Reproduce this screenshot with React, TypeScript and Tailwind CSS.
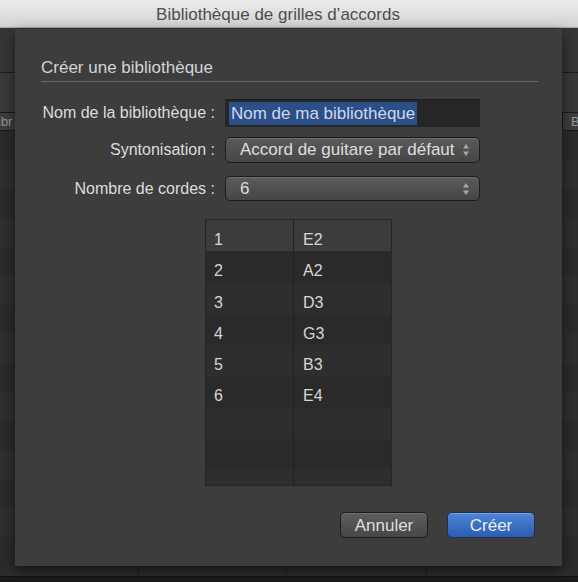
const FONT = { fontFamily: '"Liberation Sans", Arial, sans-serif' }

const STRINGS = [
  ['1', 'E2'],
  ['2', 'A2'],
  ['3', 'D3'],
  ['4', 'G3'],
  ['5', 'B3'],
  ['6', 'E4'],
  ['', ''],
  ['', ''],
  ['', ''],
]

function Arrows() {
  return (
    <svg width="8" height="14" viewBox="0 0 8 14" className="shrink-0">
      <path d="M4 1 L7 5.5 L1 5.5 Z" fill="#a8a8a8" />
      <path d="M4 13 L7 8.5 L1 8.5 Z" fill="#a8a8a8" />
    </svg>
  )
}

function Popup({ value }: { value: string }) {
  return (
    <div className="flex h-full w-[255px] items-center justify-between rounded-[5px] border border-[#1c1c1c] bg-gradient-to-b from-[#5b5b5b] to-[#464646] pl-[14px] pr-[9px] text-[17px] text-[#dedede] shadow-[inset_0_1px_0_rgba(255,255,255,0.12)]">
      <span>{value}</span>
      <Arrows />
    </div>
  )
}

function FormRow({ label, className, children }: { label: string; className: string; children: React.ReactNode }) {
  return (
    <div className={`flex items-center ${className}`}>
      <span className="w-[184px] pr-[10px] text-right text-[16px] text-[#dcdcdc]">{label}</span>
      {children}
    </div>
  )
}

function Background() {
  const rows = Array.from({ length: 15 })
  return (
    <div className="flex h-[554px] flex-col bg-[#2c2c2c]">
      <div className="h-[45px] border-b border-[#1c1c1c] bg-[#363636]" />
      <div className="h-[39px] bg-[#393939]" />
      <div className="flex h-[19px] items-center justify-between border-y border-[#1a1a1a] bg-[#3d3d3d] text-[13px] text-[#9a9a9a]">
        <span className="-ml-[2px]">ibr</span>
        <span className="w-[16px] border-l border-[#1a1a1a] pl-[8px]">B</span>
      </div>
      <div className="flex flex-1 flex-col">
        {rows.map((_, i) => (
          <div key={i} className={`h-[29px] ${i % 2 === 0 ? 'bg-[#2b2b2b]' : 'bg-[#2f2f2f]'}`} />
        ))}
      </div>
    </div>
  )
}

export default function App() {
  return (
    <div className="relative h-[582px] w-[578px] overflow-hidden bg-[#2c2c2c]" style={FONT}>
      {/* Title bar */}
      <div className="flex h-[28px] items-center justify-center border-b border-[#a9a9a9] bg-gradient-to-b from-[#ececec] to-[#d3d3d3] pr-[22px] pt-[3px] text-[17px] text-[#4d4d4d]">
        Bibliothèque de grilles d’accords
      </div>

      <Background />

      {/* Bottom strip */}
      <div className="absolute bottom-0 left-0 right-0 flex h-[6px] border-t border-[#111] bg-[#1b1b1b]" />
      <div className="absolute bottom-[6px] left-[138px] h-[12px] w-px bg-[#1f1f1f]" />
      <div className="absolute bottom-[6px] left-[286px] h-[12px] w-px bg-[#1f1f1f]" />
      <div className="absolute bottom-[6px] left-[426px] h-[12px] w-px bg-[#1f1f1f]" />

      {/* Sheet */}
      <div className="absolute left-[15px] top-[29px] flex h-[537px] w-[547px] flex-col bg-[#3d3d3d] px-[26px] pt-[29px] shadow-[0_4px_12px_rgba(0,0,0,0.55)]">
        <div className="text-[17px] leading-[20px] text-[#d4d4d4]">Créer une bibliothèque</div>
        <div className="mt-[3px] h-px w-[497px] bg-[#6a6a6a]" />

        <FormRow label="Nom de la bibliothèque :" className="mt-[17px] h-[28px]">
          <div className="flex h-[28px] w-[255px] items-center border-t border-[#1c1c1c] bg-[#262626] px-[4px]">
            <span className="bg-[#2c4f88] px-[2px] py-[2px] text-[17px] leading-[19px] text-[#cdd9ee]">Nom de ma bibliothèque</span>
          </div>
        </FormRow>
        <FormRow label="Syntonisation :" className="mt-[10px] h-[26px]">
          <Popup value="Accord de guitare par défaut" />
        </FormRow>
        <FormRow label="Nombre de cordes :" className="mt-[13px] h-[25px]">
          <Popup value="6" />
        </FormRow>

        {/* Strings table */}
        <div className="ml-[164px] mt-[18px] h-[267px] w-[187px] overflow-hidden border border-[#262626] bg-[#2a2a2a]">
          {STRINGS.map(([n, note], i) => (
            <div
              key={i}
              className={`flex h-[31.3px] text-[16px] leading-[31px] text-[#d6d6d6] ${
                i === 0 ? 'bg-[#3c3c3c]' : i % 2 === 1 ? 'bg-[#2a2a2a]' : 'bg-[#2e2e2e]'
              }`}
            >
              <span className="w-[88px] border-r border-[#222] pl-[8px] pt-[4px]">{n || '\u00a0'}</span>
              <span className="pl-[9px] pt-[4px]">{note}</span>
            </div>
          ))}
        </div>

        {/* Buttons */}
        <div className="mt-[26px] flex justify-end gap-[19px] pr-[1px]">
          <button className="h-[26px] w-[88px] rounded-[5px] border border-[#1c1c1c] bg-gradient-to-b from-[#5e5e5e] to-[#474747] text-[17px] text-[#dedede] shadow-[inset_0_1px_0_rgba(255,255,255,0.12)]">
            Annuler
          </button>
          <button className="h-[26px] w-[88px] rounded-[5px] border border-[#1d2f55] bg-gradient-to-b from-[#4f84d6] to-[#2c5dae] text-[17px] text-[#e6eefb] shadow-[inset_0_1px_0_rgba(255,255,255,0.25)]">
            Créer
          </button>
        </div>
      </div>
    </div>
  )
}
